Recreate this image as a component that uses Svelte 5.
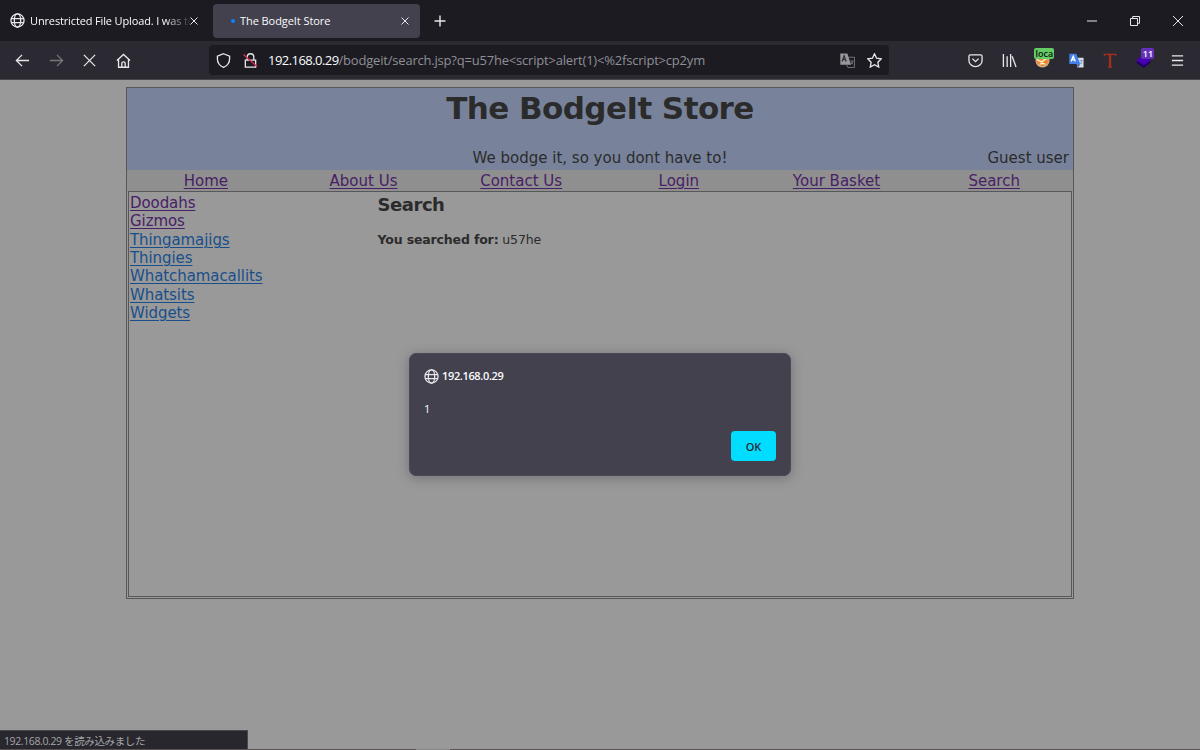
<script>
	const menu = ["Home", "About Us", "Contact Us", "Login", "Your Basket", "Search"];
	const products = [
		{ name: "Doodahs", visited: true },
		{ name: "Gizmos", visited: true },
		{ name: "Thingamajigs" },
		{ name: "Thingies" },
		{ name: "Whatchamacallits" },
		{ name: "Whatsits" },
		{ name: "Widgets" }
	];
	let open = $state(true);
</script>

{#snippet globe()}
	<svg class="globe" viewBox="0 0 16 16">
		<circle cx="8" cy="8" r="7" />
		<ellipse cx="8" cy="8" rx="3.4" ry="7" />
		<path d="M1.2 6h13.6M1.2 10.3h13.6" />
	</svg>
{/snippet}

{#snippet cross()}
	<svg class="cross" viewBox="0 0 8 8"><path d="M.5.5l7 7M7.5.5l-7 7" /></svg>
{/snippet}

<div class="browser">
	<div class="tabs">
		<div class="tab">
			{@render globe()}
			<span class="label faded">Unrestricted File Upload. I was to</span>
			{@render cross()}
		</div>
		<div class="tab active">
			<i class="dot"></i>
			<span class="label">The BodgeIt Store</span>
			{@render cross()}
		</div>
		<svg class="plus" viewBox="0 0 12 12"><path d="M6 .5v11M.5 6h11" /></svg>
		<div class="window">
			<svg width="10" height="10" viewBox="0 0 10 10"><path d="M0 5h10" /></svg>
			<svg width="10" height="10" viewBox="0 0 10 10"><path d="M.5 2.5h7v7h-7zM2.7 2.5v-2h6.8v6.8h-2" /></svg>
			<svg width="10" height="10" viewBox="0 0 10 10"><path d="M0 0l10 10M10 0L0 10" /></svg>
		</div>
	</div>

	<div class="toolbar">
		<div class="buttons">
			<svg viewBox="0 0 16 16"><path d="M15 8H1.5M7.5 2L1.5 8l6 6" /></svg>
			<svg class="off" viewBox="0 0 16 16"><path d="M1 8h13.5M8.5 2l6 6-6 6" /></svg>
			<svg viewBox="0 0 16 16"><path d="M2 2l12 12M14 2L2 14" /></svg>
			<svg viewBox="0 0 16 16"><path d="M1 8l7-6.5L15 8M2.7 6.7v8.5h10.6V6.7M6.2 15v-4q0-1.5 1.8-1.5t1.8 1.5v4" /></svg>
		</div>
		<div class="address">
			<svg viewBox="0 0 16 16"><path d="M8 .8l6.5 2.5v3c0 4-2 7-6.5 9-4.5-2-6.5-5-6.5-9v-3z" /></svg>
			<svg class="lock" viewBox="0 0 16 16">
				<path d="M2.5 7.5h11V15h-11zM4.5 7.3v-3a3.5 3.5 0 017 0v3" />
				<path class="slash" d="M.5 1.5l14.5 13" />
			</svg>
			<span class="url"><b>192.168.0.29</b>/bodgeit/search.jsp?q=u57he&lt;script&gt;alert(1)&lt;%2fscript&gt;cp2ym</span>
			<svg class="translate" viewBox="0 0 16 16">
				<path class="back" d="M9 4.5h6.5v11H8.5l-1.500-3" />
				<path class="front" d="M.3.5h7.500l4 12H.3z" />
				<path class="letter" d="M2.2 9l2.200-6 2.200 6M3 7h3" />
				<path class="back" d="M11 8.500h3.500M13.700 8.500q-.5 2.500-2.500 3.500M11.500 10l2.500 2" />
			</svg>
			<svg class="star" viewBox="0 0 16 16"><path d="M8 .8l2.2 4.700 5.100.7-3.700 3.600.9 5.200L8 12.500 3.500 15l.9-5.200L.7 6.200l5.100-.7z" /></svg>
		</div>
		<div class="extensions">
			<svg viewBox="0 0 16 16"><path d="M2.5 2h11Q15 2 15 3.500V8A7 6.500 0 011 8V3.500Q1 2 2.500 2zM4.700 6L8 9.200 11.300 6" /></svg>
			<svg viewBox="0 0 16 16"><path d="M1.5 1v14M5.500 3.500V15M9.200 1v14M10.800 3.500L15 15" /></svg>
			<div class="proxy">
				<svg viewBox="0 0 16 16">
					<circle cx="8" cy="8" r="7.500" fill="#d5b18a" stroke="none" />
					<path d="M1 8q7-4 14 0-2 5-7 6-5-1-7-6" fill="#ed882b" stroke="none" />
					<path d="M2 7l5 2.500L12 6M5 12l3-1 3 1" stroke="#fff0cf" />
				</svg>
				<span>loca</span>
			</div>
			<svg viewBox="0 0 16 16">
				<path d="M7 5h8.500v10.500H9z" fill="#d7dce4" stroke="none" />
				<path d="M.3.800h7.500l4.200 11H.3z" fill="#427fe8" stroke="none" />
				<path d="M8.500 12H12l-2.500 3.500z" fill="#2451a5" stroke="none" />
				<path d="M2.200 9l2.300-5.500L6.800 9M3.200 7.300h2.700" stroke="#fff" />
				<path d="M11.500 8h3.300M13.500 8q-.2 2.500-2 4M12.500 10l2 2" stroke="#6892d0" stroke-width=".8" />
			</svg>
			<svg viewBox="0 0 16 16">
				<path d="M1.500 3.500V1.500h12v2M5.500 15h4" stroke="#a92d1c" stroke-width="1.400" />
				<path d="M7.500 1.500V15" stroke="#a92d1c" stroke-width="2.400" />
			</svg>
			<div class="layers">
				<svg viewBox="0 0 16 16">
					<path d="M0 10l8-5 8 5-8 6z" fill="#210064" stroke="none" />
					<path d="M0 7.500l8-5.500 8 5.500-8 5.500z" fill="#4900b0" stroke="none" />
				</svg>
				<span>11</span>
			</div>
			<svg viewBox="0 0 16 16"><path d="M2 3h12M2 8h12M2 13h12" /></svg>
		</div>
	</div>

	<div class="page">
		<div class="store">
			<header>
				<h1>The BodgeIt Store</h1>
				<div class="banner">
					<span></span>
					<span class="slogan">We bodge it, so you dont have to!</span>
					<span class="user">Guest user</span>
				</div>
			</header>
			<nav>
				{#each menu as item}
					<a class="visited" href="#top">{item}</a>
				{/each}
			</nav>
			<div class="content">
				<div class="side">
					{#each products as product}
						<a class:visited={product.visited} href="#top">{product.name}</a>
					{/each}
				</div>
				<main>
					<h3>Search</h3>
					<p><b>You searched for:</b> <span>u57he</span></p>
				</main>
			</div>
		</div>
	</div>

	<div class="status">192.168.0.29 を読み込みました</div>
	<div class="edge"><i></i></div>

	{#if open}
		<div class="dialog" role="alertdialog">
			<div class="host">{@render globe()}<b>192.168.0.29</b></div>
			<div class="message">1</div>
			<button onclick={() => (open = false)}>OK</button>
		</div>
	{/if}
</div>

<style>
	:global(body) {
		margin: 0;
		overflow: hidden;
	}

	.browser {
		position: relative;
		display: flex;
		flex-direction: column;
		width: 1200px;
		height: 750px;
		overflow: hidden;
		background: #99999a;
		font-family: "Open Sans", "Noto Sans", "Noto Sans CJK JP", sans-serif;
		color: #fbfbfe;
	}

	svg {
		display: block;
		flex: none;
		fill: none;
		stroke: #e7e7eb;
		stroke-width: 1.4;
	}

	.tabs {
		display: flex;
		align-items: center;
		box-sizing: border-box;
		height: 41px;
		background: #1c1b22;
	}

	.tab {
		display: flex;
		align-items: center;
		box-sizing: border-box;
		width: 209px;
		height: 34px;
		padding: 0 11px 0 10px;
		font-size: 11px;
		line-height: 16px;
		white-space: nowrap;
	}

	.tab.active {
		width: 207px;
		margin-left: 4px;
		padding-left: 18px;
		border-radius: 4px;
		background: #42414d;
	}

	.globe {
		width: 15px;
		height: 15px;
	}

	.label {
		flex: 1;
		margin-left: 5px;
		letter-spacing: -0.07px;
	}

	/* the text runs on under the close button, faded out before it */
	.faded {
		flex: none;
		width: 170px;
		margin-right: -10px;
		letter-spacing: -0.14px;
		mask-image: linear-gradient(to right, #000 134px, transparent 162px);
	}

	.dot {
		width: 4px;
		height: 4px;
		border-radius: 50%;
		background: #0a84ff;
	}

	.cross {
		width: 8px;
		height: 8px;
		stroke-width: 1;
	}

	.plus {
		width: 12px;
		height: 12px;
		margin-left: 14px;
	}

	.window {
		display: flex;
		gap: 33px;
		margin: 0 17px 0 auto;
	}

	.window svg {
		stroke-width: 1;
	}

	.toolbar {
		display: flex;
		align-items: center;
		box-sizing: border-box;
		height: 39px;
		border-bottom: 1px solid #47464d;
		background: #2b2a33;
	}

	.toolbar svg {
		width: 15px;
		height: 15px;
	}

	.buttons {
		display: flex;
		gap: 18.7px;
		width: 194px;
		padding-left: 15px;
	}

	.off {
		opacity: 0.4;
	}

	.address {
		display: flex;
		align-items: center;
		box-sizing: border-box;
		width: 680px;
		height: 30px;
		padding: 0 7px;
		border-radius: 4px;
		background: #1c1b22;
	}

	.lock {
		margin-left: 12px;
	}

	.lock .slash {
		stroke: #e22850;
	}

	.url {
		flex: 1;
		margin-left: 10px;
		color: #8f8f96;
		font-size: 13px;
		letter-spacing: -0.2px;
		line-height: 20px;
		white-space: nowrap;
	}

	.url b {
		color: #fbfbfe;
		font-weight: 400;
		letter-spacing: -0.55px;
	}

	.translate .back {
		stroke: #77777c;
		stroke-width: 1;
	}

	.translate .front {
		fill: #98989c;
		stroke: none;
	}

	.translate .letter {
		stroke: #333239;
	}

	.star {
		margin-left: 12px;
	}

	.extensions {
		display: flex;
		gap: 18.7px;
		margin-left: 79px;
	}

	.proxy,
	.layers {
		position: relative;
	}

	.proxy span,
	.layers span {
		position: absolute;
		text-align: center;
	}

	.proxy span {
		top: -5px;
		left: -1px;
		width: 20px;
		height: 11px;
		border-radius: 2px;
		background: #63cc65;
		color: #101510;
		font-size: 9px;
		font-weight: 600;
		line-height: 11px;
	}

	.layers span {
		top: -5px;
		left: 5px;
		width: 13px;
		height: 11px;
		border-radius: 2px;
		background: #6332b8;
		color: #fff;
		font-size: 9px;
		font-weight: 600;
		line-height: 11px;
	}

	.page {
		flex: 1;
		padding-top: 7px;
		color: #2b2b2c;
		font-family: "DejaVu Sans", Verdana, sans-serif;
		font-size: 15px;
	}

	.store {
		display: flex;
		flex-direction: column;
		box-sizing: border-box;
		width: 948px;
		height: 512px;
		margin: 0 auto;
		border: 1px solid #58585a;
	}

	header {
		height: 82px;
		background: #78839b;
		text-align: center;
	}

	h1 {
		height: 60px;
		margin: 0;
		font-size: 31px;
		letter-spacing: -0.57px;
		line-height: 40px;
	}

	.banner {
		display: grid;
		grid-template-columns: 1fr auto 1fr;
		padding: 0 4px;
		line-height: 20px;
	}

	.user {
		text-align: right;
	}

	nav {
		display: grid;
		grid-template-columns: repeat(6, 1fr);
		height: 21px;
		background: #8f8f90;
		line-height: 22px;
		text-align: center;
	}

	a {
		color: #184f8a;
		text-underline-offset: 2px;
		text-decoration-thickness: 1px;
	}

	a.visited {
		color: #482065;
	}

	.content {
		display: flex;
		flex: 1;
		margin: 0 1px 1px;
		border: 1px solid #58585a;
	}

	.side {
		display: flex;
		flex-direction: column;
		align-items: flex-start;
		width: 247.5px;
		padding: 2.2px 0 0 1px;
		letter-spacing: -0.08px;
		line-height: 18.3px;
	}

	h3 {
		margin: 2px 0 16px;
		font-size: 18px;
		letter-spacing: -0.45px;
		line-height: 22px;
	}

	p {
		margin: 0;
		font-size: 12.5px;
		letter-spacing: -0.15px;
		line-height: 15px;
	}

	.status {
		position: absolute;
		bottom: 0;
		left: 0;
		box-sizing: border-box;
		width: 248px;
		height: 20px;
		padding-left: 4px;
		border: 1px solid #47474c;
		border-left: 0;
		background: #28272d;
		color: #a5a5a9;
		font-size: 10.5px;
		letter-spacing: -0.38px;
		line-height: 20px;
	}

	.edge {
		position: absolute;
		right: 0;
		bottom: 0;
		left: 0;
		height: 1px;
		background: #575355;
	}

	.edge i {
		display: block;
		width: 34px;
		height: 1px;
		margin-left: 416px;
		background: #858385;
	}

	.dialog {
		position: absolute;
		top: 353px;
		left: 409px;
		display: flex;
		flex-direction: column;
		box-sizing: border-box;
		width: 382px;
		height: 123px;
		padding: 15px 14px 14px;
		border: 1px solid #4b4a55;
		border-radius: 7px;
		background: #42414d;
		box-shadow: 0 2px 12px rgba(40, 40, 50, 0.35);
		font-size: 11px;
	}

	.host {
		display: flex;
		align-items: center;
		gap: 3px;
		height: 15px;
	}

	.host b {
		padding-bottom: 1px;
		font-weight: 600;
		letter-spacing: -0.35px;
		line-height: 14px;
	}

	.message {
		margin-top: 17px;
		line-height: 15px;
	}

	button {
		align-self: flex-end;
		width: 45px;
		height: 30px;
		margin-top: 15px;
		padding: 0;
		border: 0;
		border-radius: 4px;
		background: #00ddff;
		color: #2b2a33;
		font: 600 11px "Open Sans", sans-serif;
	}
</style>
